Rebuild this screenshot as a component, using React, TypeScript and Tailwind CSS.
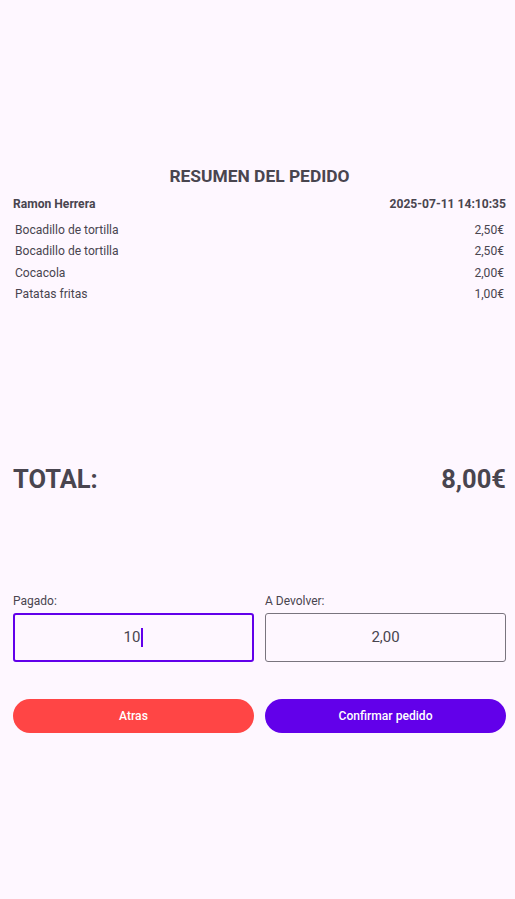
import React, { FC } from "react";

type Item = { name: string; price: string };

const items: Item[] = [
  { name: "Bocadillo de tortilla", price: "2,50€" },
  { name: "Bocadillo de tortilla", price: "2,50€" },
  { name: "Cocacola", price: "2,00€" },
  { name: "Patatas fritas", price: "1,00€" },
];

const App: FC = () => {
  return (
    <div
      className="min-h-screen bg-[#fef7ff] pl-[13px] pr-[9px] pt-[164px] text-[#49454f]"
      style={{ fontFamily: "Roboto, 'Noto Sans', sans-serif" }}
    >
      <h1 className="text-center text-[17.4px] font-bold leading-[24px]">
        RESUMEN DEL PEDIDO
      </h1>
      <div className="mt-[8px] flex justify-between text-[12.1px] font-bold leading-[16px]">
        <span>Ramon Herrera</span>
        <span>2025-07-11 14:10:35</span>
      </div>
      <ul className="mt-[8px] pl-[2px] pr-[2px]">
        {items.map((item, i) => (
          <li
            key={i}
            className="flex justify-between text-[12.1px] leading-[21.3px]"
          >
            <span>{item.name}</span>
            <span>{item.price}</span>
          </li>
        ))}
      </ul>

      <div className="mt-[158px] flex justify-between text-[25.5px] font-bold leading-[32px]">
        <span>TOTAL:</span>
        <span>8,00€</span>
      </div>

      <div className="mt-[98px] grid grid-cols-2 gap-[11px]">
        <div>
          <label className="block text-[12px] leading-[16px]">Pagado:</label>
          <div className="mt-[4px] flex h-[49px] items-center justify-center rounded-[3px] border-2 border-[#6200ea] text-[15px]">
            <span>10</span>
            <span className="ml-[1px] h-[19px] w-[2px] bg-[#6200ea]" />
          </div>
        </div>
        <div>
          <label className="block text-[12px] leading-[16px]">A Devolver:</label>
          <div className="mt-[4px] flex h-[49px] items-center justify-center rounded-[3px] border border-[#79747e] text-[15px]">
            2,00
          </div>
        </div>
      </div>

      <div className="mt-[37px] grid grid-cols-2 gap-[11px]">
        <button className="h-[34px] rounded-full bg-[#ff4545] text-[12.1px] font-medium text-white">
          Atras
        </button>
        <button className="h-[34px] rounded-full bg-[#6200ea] text-[12.1px] font-medium text-white">
          Confirmar pedido
        </button>
      </div>
    </div>
  );
};

export default App;
